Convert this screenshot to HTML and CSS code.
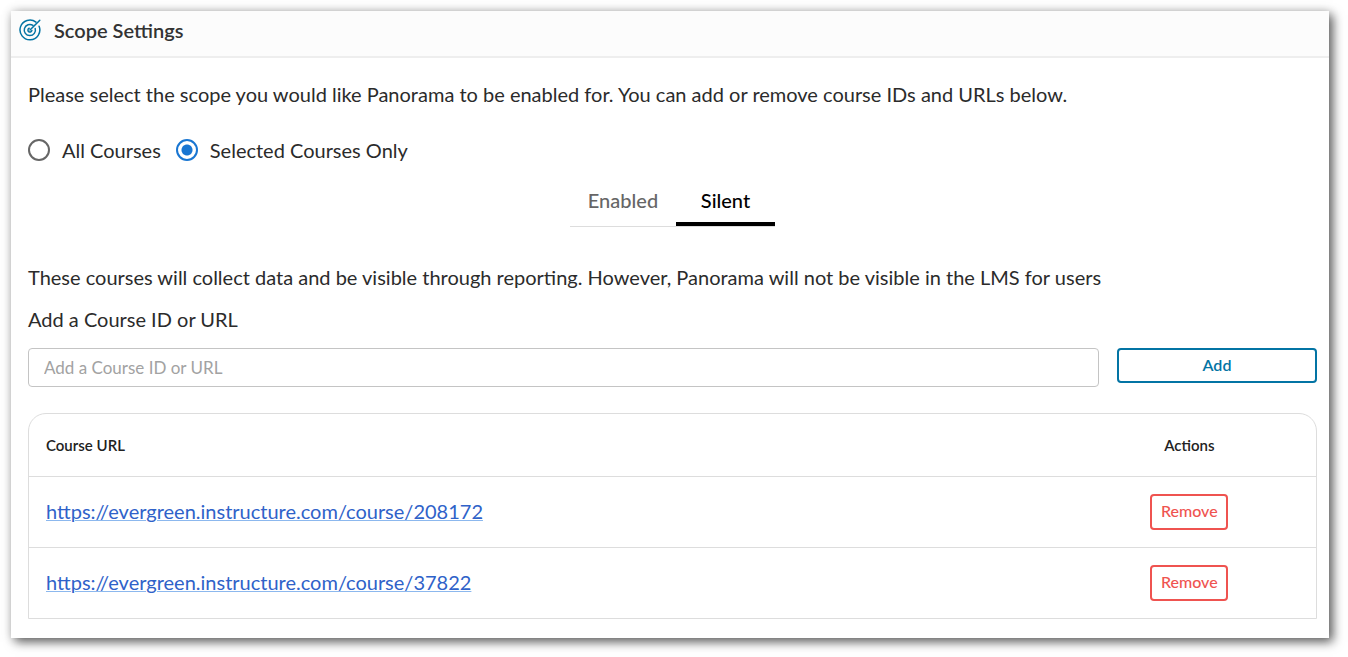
FILE: index.html
```html
<!DOCTYPE html>
<html lang="en">
<head>
<meta charset="UTF-8">
<meta name="viewport" content="width=device-width, initial-scale=1.0">
<title>Scope Settings</title>
<link rel="stylesheet" href="styles.css">
</head>
<body>

<main class="card">
  <header class="card-header">
    <svg class="scope-icon" viewBox="0 0 22 22" fill="none" stroke="currentColor" stroke-width="1.5" stroke-linecap="round" aria-hidden="true">
      <path d="M17 3.1A9.9 9.9 0 1 0 20.1 7.2"/>
      <path d="M14 6.4A5.6 5.6 0 1 0 16.2 9.4"/>
      <path d="M10.2 9.2A2 2 0 1 0 12.9 11.4"/>
      <path d="M11 11L20.8 1.2"/>
    </svg>
    <h1 class="card-title">Scope Settings</h1>
  </header>

  <div class="card-body">
    <p class="intro">Please select the scope you would like Panorama to be enabled for. You can add or remove course IDs and URLs below.</p>

    <div class="radio-group">
      <label class="radio-label"><input type="radio" class="radio" name="scope" value="all">All Courses</label>
      <label class="radio-label"><input type="radio" class="radio" name="scope" value="selected" checked>Selected Courses Only</label>
    </div>

    <div class="tabs" role="tablist">
      <button type="button" class="tab" role="tab" aria-selected="false">Enabled</button>
      <button type="button" class="tab active" role="tab" aria-selected="true">Silent</button>
    </div>

    <p class="description">These courses will collect data and be visible through reporting. However, Panorama will not be visible in the LMS for users</p>

    <form class="add-form">
      <label class="add-label" for="courseInput">Add a Course ID or URL</label>
      <div class="add-row">
        <input type="text" class="course-input" id="courseInput" placeholder="Add a Course ID or URL">
        <button type="button" class="add-button">Add</button>
      </div>
    </form>

    <table class="course-table">
      <thead>
        <tr>
          <th>Course URL</th>
          <th class="actions">Actions</th>
        </tr>
      </thead>
      <tbody>
        <tr>
          <td><a href="https://evergreen.instructure.com/course/208172">https://evergreen.instructure.com/course/208172</a></td>
          <td class="actions"><button type="button" class="remove-button">Remove</button></td>
        </tr>
        <tr>
          <td><a href="https://evergreen.instructure.com/course/37822">https://evergreen.instructure.com/course/37822</a></td>
          <td class="actions"><button type="button" class="remove-button">Remove</button></td>
        </tr>
      </tbody>
    </table>
  </div>
</main>

</body>
</html>
```
FILE: styles.css
```css
* {
  box-sizing: border-box;
}
body {
  margin: 0;
  padding: 11px 19px 19px 11px;
  font-family: Lato, "Liberation Sans", sans-serif;
  font-size: 20px;
  line-height: 24px;
  color: #2b2b2b;
  background-color: #fff;
}
button,
input {
  font-family: inherit;
}
.card {
  background-color: #fff;
  box-shadow: 4px 4px 10px rgba(0, 0, 0, 0.6), 0 0 10px rgba(0, 0, 0, 0.15);
}

/* header */
.card-header {
  display: flex;
  align-items: center;
  gap: 13px;
  padding: 7px 8px 14px;
  background-color: #fcfcfc;
  border-bottom: 2px solid #eee;
}
.scope-icon {
  width: 22px;
  height: 22px;
  color: #0374a4;
}
.card-title {
  margin: 0;
  font-size: 20px;
  font-weight: 600;
  color: #333;
}

.card-body {
  padding: 24px 12px 19px 17px;
}
.intro {
  margin: 0 0 32px;
}

/* scope radios */
.radio-group {
  display: flex;
  gap: 15px;
}
.radio-label {
  display: flex;
  align-items: center;
  gap: 12px;
}
.radio {
  appearance: none;
  width: 22px;
  height: 22px;
  margin: 0;
  border: 2px solid #666;
  border-radius: 50%;
}
.radio:checked {
  border-color: #1976d2;
  background: radial-gradient(circle, #1976d2 5px, #fff 6px);
}

/* tabs */
.tabs {
  display: flex;
  justify-content: center;
  margin-top: 14px;
}
.tab {
  width: 106px;
  height: 51px;
  padding: 0 0 3px;
  font-size: 20px;
  line-height: 24px;
  font-weight: 500;
  color: #666;
  background: none;
  border: none;
  border-bottom: 1px solid #ddd;
  cursor: pointer;
}
.tab.active {
  width: 99px;
  padding-bottom: 4px;
  color: #000;
  border-bottom: none;
  box-shadow: inset 0 -1px #ddd, inset 0 -5px #000;
}

.description {
  margin: 38px 0 18px;
}

/* add form */
.add-label {
  display: block;
  margin-bottom: 17px;
}
.add-row {
  display: flex;
  align-items: flex-start;
  gap: 18px;
}
.course-input {
  flex: 1;
  height: 39px;
  padding: 0 15px;
  font-size: 17px;
  color: #2b2b2b;
  border: 1px solid #c4c4c4;
  border-radius: 4px;
}
.course-input::placeholder {
  color: #a2a2a2;
}
.add-button {
  width: 200px;
  height: 35px;
  padding: 0 0 3px;
  font-size: 16px;
  font-weight: 600;
  color: #0374a4;
  background-color: #fff;
  border: 2px solid #0374a4;
  border-radius: 4px;
  cursor: pointer;
}

/* course table */
.course-table {
  width: 100%;
  margin-top: 26px;
  border: 1px solid #ddd;
  border-radius: 18px 18px 0 0;
  border-spacing: 0;
  table-layout: fixed;
}
.course-table th {
  height: 62px;
  padding: 0 17px;
  font-size: 15px;
  font-weight: 600;
  text-align: left;
  color: #222;
}
.course-table td {
  height: 71px;
  padding: 0 17px 2px;
  border-top: 1px solid #ddd;
}
.course-table .actions {
  width: 20%;
  padding: 0 13px 0 17px;
  text-align: center;
}
.course-table a {
  color: #2f62c9;
  text-decoration-color: #8cb8ee;
  text-decoration-thickness: 1px;
}
.remove-button {
  width: 78px;
  height: 36px;
  padding: 0 0 4px;
  font-size: 16px;
  font-weight: 500;
  color: #ef5350;
  background-color: #fff;
  border: 2px solid #ef5350;
  border-radius: 4px;
  vertical-align: middle;
  cursor: pointer;
}
```
